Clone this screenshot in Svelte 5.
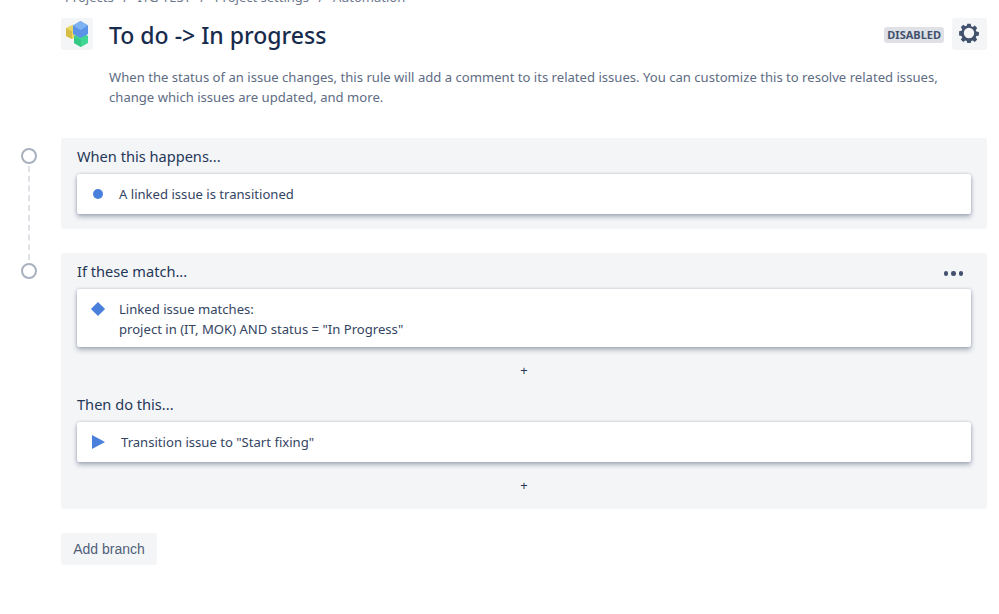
<script>
	const crumbs = ["Projects", "ITG-TEST", "Project settings", "Automation"];
</script>

<div class="page">
	<nav class="crumbs">
		{#each crumbs as crumb, i}
			{#if i > 0}<span class="sep">/</span>{/if}
			<span>{crumb}</span>
		{/each}
	</nav>

	<header class="head">
		<div class="logo">
			<svg width="26" height="26" viewBox="0 0 26 26">
				<path d="M2 7l6-3 6 3v8l-6 3-6-3z" fill="#e8d667" />
				<path d="M8 10.500V18l-6-3V7z" fill="#d8bd45" />
				<path d="M17 11l7 4v7l-7 4-7-4v-7z" fill="#3fd793" />
				<path d="M17 19v7l-7-4v-7z" fill="#35c985" />
				<path d="M16.500 0 24 4.500V13l-7.500 4L9 13V4.500z" fill="#5b94e6" />
				<path d="M16.500 0 24 4.500 16.500 9 9 4.500z" fill="#7fb2f2" />
			</svg>
		</div>
		<h1>To do -&gt; In progress</h1>
		<span class="badge">DISABLED</span>
		<button class="gear" aria-label="Settings">
			<svg width="20" height="20" viewBox="0 0 20 20">
				<path fill="#42526e" fill-rule="evenodd" d="M8.300 0.800h3.400l.5 2.500 1.500.6 2.100-1.400 2.400 2.400-1.400 2.100.6 1.500 2.500.5v3.400l-2.500.5-.6 1.500 1.400 2.100-2.400 2.400-2.100-1.400-1.500.6-.5 2.500H8.300l-.5-2.500-1.500-.6-2.100 1.400-2.400-2.400 1.400-2.100-.6-1.500-2.500-.5V8.300l2.500-.5.6-1.500-1.400-2.100 2.400-2.400 2.100 1.400 1.500-.6zM10 4.800a5.200 5.200 0 1 0 0 10.400 5.200 5.200 0 0 0 0-10.400z" />
			</svg>
		</button>
	</header>

	<p class="desc">When the status of an issue changes, this rule will add a comment to its related issues. You can customize this to resolve related issues, change which issues are updated, and more.</p>

	<section class="step first">
		<div class="gutter"><span class="dot"></span></div>
		<div class="panel">
			<h2>When this happens...</h2>
			<div class="card">
				<span class="icon"><span class="circle"></span></span>
				<span>A linked issue is transitioned</span>
			</div>
		</div>
	</section>

	<section class="step">
		<div class="gutter"><span class="dot"></span></div>
		<div class="panel">
			<button class="more" aria-label="More"><i></i><i></i><i></i></button>
			<h2>If these match...</h2>
			<div class="card tall">
				<span class="icon"><span class="diamond"></span></span>
				<span>Linked issue matches:<br />project in (IT, MOK) AND status = "In Progress"</span>
			</div>
			<div class="plus">+</div>
			<h2>Then do this...</h2>
			<div class="card">
				<span class="icon">
					<svg width="13" height="14" viewBox="0 0 13 14"><path d="M0 0l13 7-13 7z" fill="#4a7fdc" /></svg>
				</span>
				<span class="action">Transition issue to "Start fixing"</span>
			</div>
			<div class="plus last">+</div>
		</div>
	</section>

	<button class="add">Add branch</button>
</div>

<style>
	:global(body) {
		background: #fff;
		overflow: hidden;
	}

	.page {
		height: 626px;
		margin-top: -12px;
		padding: 0 12px 0 61px;
		box-sizing: border-box;
		font-family: "Noto Sans", "Open Sans", sans-serif;
		color: #344563;
		font-size: 13.100px;
	}

	.crumbs {
		display: flex;
		gap: 9.500px;
		height: 18px;
		padding-left: 4px;
		font-size: 13px;
		line-height: 18px;
		color: #6b778c;
	}

	.head {
		display: flex;
		align-items: center;
		height: 32px;
		margin-top: 12px;
	}

	.logo {
		width: 32px;
		height: 32px;
		margin-right: 16px;
		display: flex;
		align-items: center;
		justify-content: center;
		background: #f4f5f7;
		border-radius: 3px;
	}

	h1 {
		flex: 1;
		margin: 0;
		padding-top: 2px;
		font-size: 23px;
		font-weight: 500;
		color: #172b4d;
		line-height: 32px;
	}

	.badge {
		background: #dfe1e6;
		color: #42526e;
		border-radius: 3px;
		font-size: 11px;
		font-weight: 700;
		line-height: 16px;
		padding: 0 3px;
		margin: 2px 8px 0 0;
	}

	.gear {
		width: 35px;
		height: 32px;
		border: 0;
		padding: 0 2px 2px 0;
		background: #f4f5f7;
		border-radius: 3px;
		display: flex;
		align-items: center;
		justify-content: center;
	}

	.desc {
		margin: 17px 40px 0 48px;
		line-height: 20px;
		color: #5e6c84;
		height: 44px;
	}

	.step {
		display: flex;
		margin: 0 0 24px -61px;
		position: relative;
	}

	.step.first {
		margin-top: 27px;
	}

	.gutter {
		width: 61px;
		flex: none;
		padding: 10px 0 0 21px;
		box-sizing: border-box;
	}

	.dot {
		display: block;
		width: 16px;
		height: 16px;
		box-sizing: border-box;
		border: 2px solid #a9b1be;
		border-radius: 50%;
	}

	.first::after {
		content: "";
		position: absolute;
		left: 28px;
		top: 28px;
		height: 94px;
		border-left: 2px dashed #dfe1e6;
	}

	.panel {
		flex: 1;
		position: relative;
		background: #f4f5f7;
		border-radius: 3px;
		padding: 7px 16px 0;
	}

	.first .panel {
		padding-bottom: 15px;
	}

	h2 {
		margin: 0 0 7px;
		font-size: 14.600px;
		font-weight: 400;
		line-height: 22px;
		color: #253858;
	}

	.card {
		display: flex;
		align-items: center;
		height: 40px;
		background: #fff;
		border-radius: 2px;
		box-shadow: 0 3px 5px rgba(9, 30, 66, 0.3), 0 0 3px rgba(9, 30, 66, 0.22);
		line-height: 20px;
	}

	.card.tall {
		height: 58px;
		align-items: flex-start;
		padding-top: 10px;
		box-sizing: border-box;
	}

	.icon {
		width: 42px;
		flex: none;
		display: flex;
		justify-content: center;
	}

	.circle {
		width: 10px;
		height: 10px;
		border-radius: 50%;
		background: #4a7fdc;
	}

	.diamond {
		width: 10px;
		height: 10px;
		margin-top: 5px;
		transform: rotate(45deg);
		background: #4a7fdc;
	}

	.action {
		margin-left: 2px;
	}

	.plus {
		text-align: center;
		font-size: 13px;
		height: 46px;
		line-height: 46px;
		color: #253858;
	}

	.plus.last {
		height: 47px;
	}

	.more {
		position: absolute;
		top: 18px;
		right: 24px;
		display: flex;
		gap: 3px;
		padding: 0;
		border: 0;
		background: none;
	}

	.more i {
		width: 4.500px;
		height: 4.500px;
		border-radius: 50%;
		background: #42526e;
	}

	.add {
		height: 32px;
		width: 96px;
		border: 0;
		padding: 0;
		border-radius: 3px;
		background: #f4f5f7;
		color: #505f79;
		font-family: "Liberation Sans", sans-serif;
		font-size: 14px;
	}
</style>
